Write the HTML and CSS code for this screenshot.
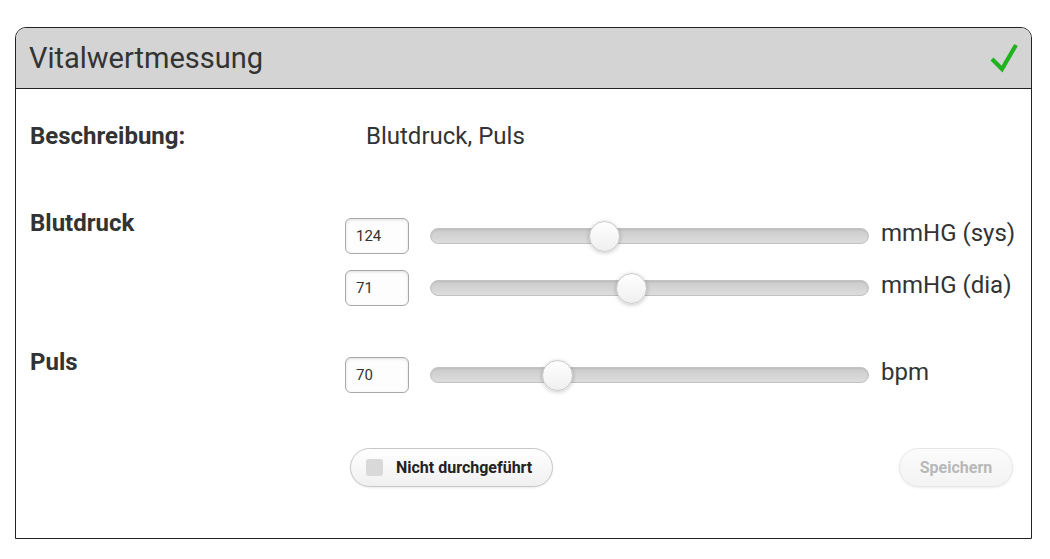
FILE: index.html
```html
<!DOCTYPE html>
<html lang="de">
<head>
<meta charset="utf-8">
<title>Vitalwertmessung</title>
<link rel="stylesheet" href="styles.css">
</head>
<body>
<div class="card">
  <div class="header">
    <h1 class="title">Vitalwertmessung</h1>
    <svg class="check" width="30" height="32" viewBox="0 0 30 32">
      <polyline points="3,17 13,27 27,3" fill="none" stroke="#1fb41f" stroke-width="4.2" stroke-linecap="butt" stroke-linejoin="miter"/>
    </svg>
  </div>
  <div class="body">
    <div class="row desc">
      <div class="label">Beschreibung:</div>
      <div class="desc-value">Blutdruck, Puls</div>
    </div>
    <div class="row section bp">
      <div class="label">Blutdruck</div>
      <div class="controls">
        <div class="slider-row">
          <div class="num">124</div>
          <div class="track"><div class="thumb" style="left:39.7%"></div></div>
          <div class="unit">mmHG (sys)</div>
        </div>
        <div class="slider-row">
          <div class="num">71</div>
          <div class="track"><div class="thumb" style="left:45.7%"></div></div>
          <div class="unit">mmHG (dia)</div>
        </div>
      </div>
    </div>
    <div class="row section pulse">
      <div class="label">Puls</div>
      <div class="controls">
        <div class="slider-row">
          <div class="num">70</div>
          <div class="track"><div class="thumb" style="left:28.8%"></div></div>
          <div class="unit">bpm</div>
        </div>
      </div>
    </div>
    <div class="row actions">
      <div></div>
      <div class="buttons">
        <button class="btn toggle"><span class="box"></span>Nicht durchgeführt</button>
        <button class="btn save" disabled>Speichern</button>
      </div>
    </div>
  </div>
</div>
</body>
</html>
```

FILE: styles.css
```css
* { box-sizing: border-box; }
html, body { margin: 0; padding: 0; background: #fff; }
body {
  font-family: Roboto, "Liberation Sans", Arial, sans-serif;
  color: #333;
  padding: 27px 0 0 15px;
}
.card {
  width: 1017px;
  height: 512px;
  border: 1px solid #222;
  border-radius: 11px 11px 0 0;
  overflow: hidden;
  background: #fff;
}
.header {
  height: 61px;
  background: #d4d4d4;
  border-bottom: 1px solid #222;
  display: flex;
  align-items: center;
  justify-content: space-between;
  padding: 0 12px 0 13px;
}
.title {
  margin: 0;
  font-size: 29px;
  font-weight: 400;
  color: #333;
  line-height: 34px;
}
.check { display: block; }
.body {
  padding: 34px 14px 0 14px;
}
.row {
  display: grid;
  grid-template-columns: 315px 1fr;
}
.label {
  font-weight: 700;
  font-size: 24px;
  line-height: 26px;
  color: #333;
}
.desc-value {
  font-size: 24px;
  line-height: 26px;
  padding-left: 21px;
  color: #333;
}
.bp { margin-top: 61px; }
.pulse { margin-top: 43px; }
.controls {
  padding-top: 8px;
  display: flex;
  flex-direction: column;
  gap: 16px;
}
.slider-row {
  display: flex;
  align-items: center;
  height: 36px;
}
.num {
  width: 64px;
  height: 36px;
  border: 1px solid #a8a8a8;
  border-radius: 6px;
  background: #fdfdfd;
  box-shadow: inset 0 1px 3px rgba(0,0,0,0.12);
  font-size: 15px;
  line-height: 34px;
  padding-left: 10px;
  color: #333;
}
.track {
  position: relative;
  width: 439px;
  height: 16px;
  margin-left: 21px;
  border-radius: 8px;
  border: 1px solid #c2c2c2;
  background: linear-gradient(#cbcbcb, #dddddd);
  box-shadow: inset 0 1px 2px rgba(0,0,0,0.08);
}
.thumb {
  position: absolute;
  top: 50%;
  width: 31px;
  height: 31px;
  margin-left: -15px;
  margin-top: -15.5px;
  border-radius: 50%;
  border: 1px solid #c8c8c8;
  background: linear-gradient(#ffffff, #efefef);
  box-shadow: 0 1px 4px rgba(0,0,0,0.22);
}
.unit {
  margin-left: 12px;
  font-size: 24px;
  line-height: 28px;
  color: #333;
  margin-top: -6px;
}
.actions { margin-top: 55px; }
.buttons {
  display: flex;
  justify-content: space-between;
  align-items: center;
  padding-left: 5px;
  padding-right: 4px;
}
.btn {
  font-family: Roboto, "Liberation Sans", Arial, sans-serif;
  font-weight: 700;
  font-size: 16px;
  height: 39px;
  border-radius: 20px;
  border: 1px solid #c6c6c6;
  background: linear-gradient(#ffffff, #f0f0f0);
  color: #222;
  display: flex;
  align-items: center;
  padding: 0 20px 0 15px;
  box-shadow: 0 1px 2px rgba(0,0,0,0.08);
}
.box {
  width: 17px;
  height: 17px;
  border-radius: 3px;
  background: #d9d9d9;
  margin-right: 13px;
}
.save {
  color: #b8b8b8;
  border-color: #e6e6e6;
  background: linear-gradient(#fbfbfb, #f3f3f3);
  padding: 0 21px;
  width: 114px;
  justify-content: center;
}
```
